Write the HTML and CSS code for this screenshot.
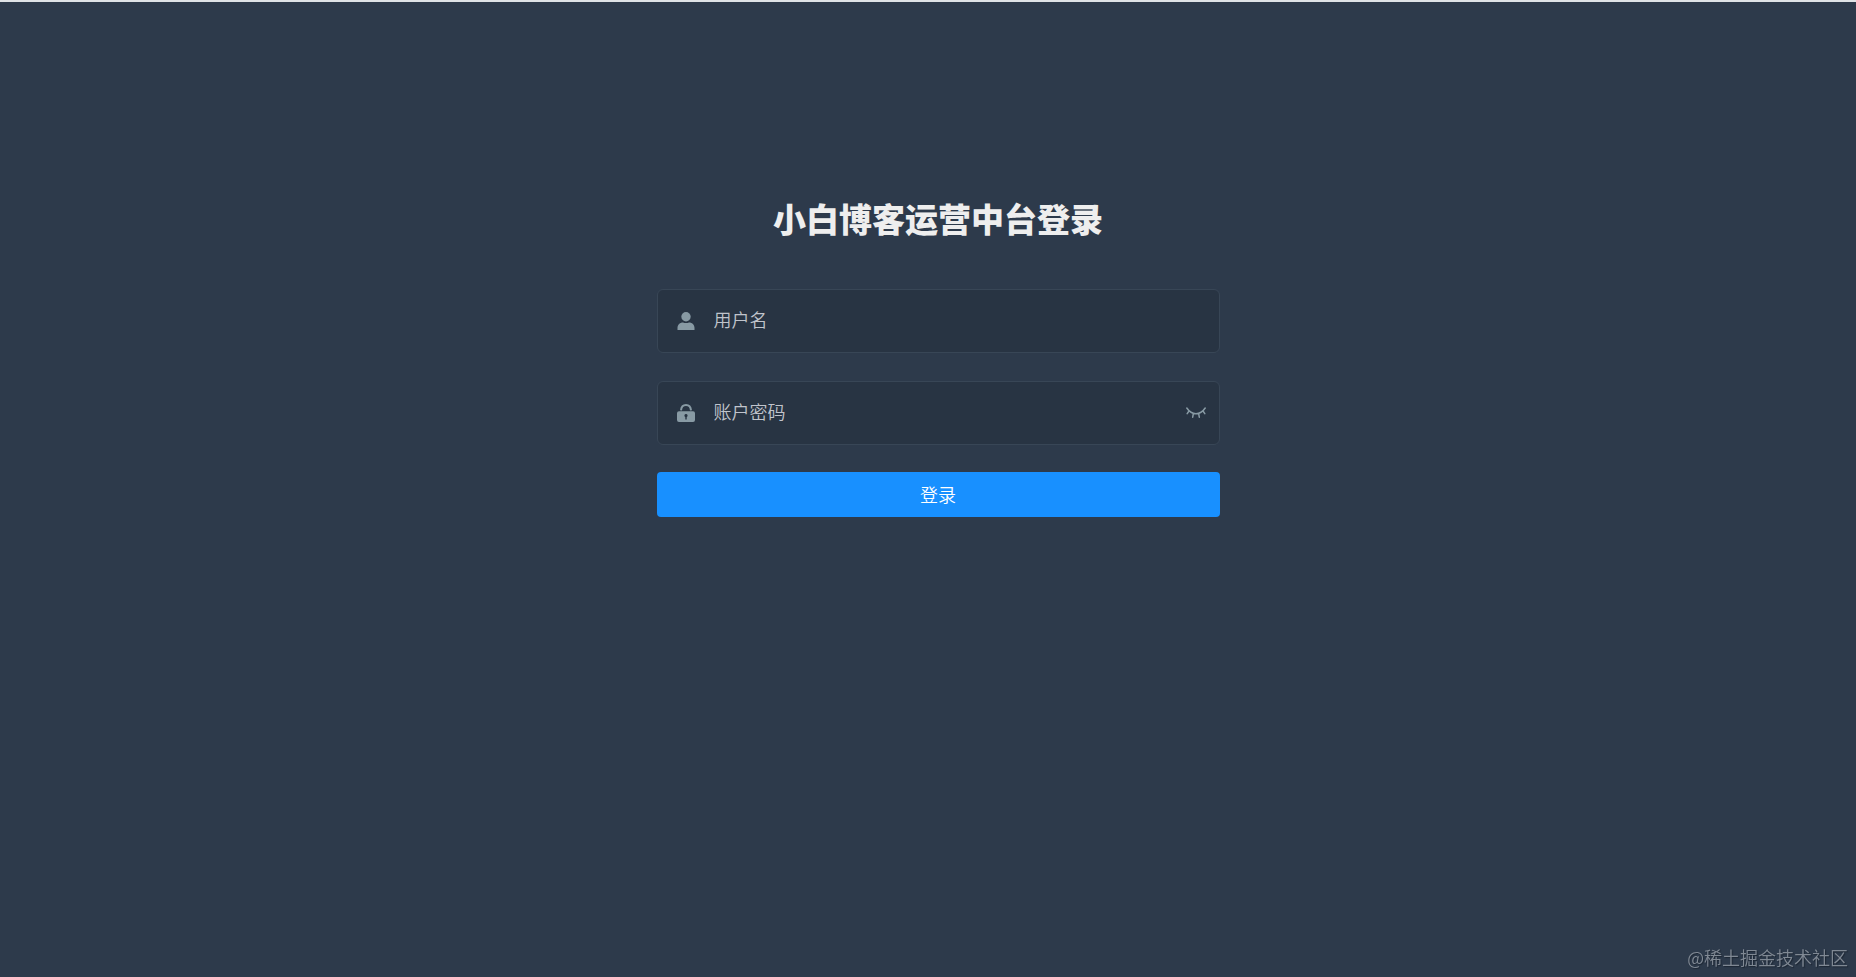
FILE: index.html
```html
<!DOCTYPE html>
<html lang="zh-CN">
<head>
  <meta charset="UTF-8">
  <meta name="viewport" content="width=device-width, initial-scale=1.0">
  <title>小白博客运营中台登录</title>
  <link rel="stylesheet" href="styles.css">
</head>
<body>
  <main class="login-container">
    <form class="login-form">
      <h1 class="title">小白博客运营中台登录</h1>

      <div class="form-item">
        <label class="svg-container" for="username" aria-label="用户名">
          <svg width="18" height="18" viewBox="0 0 18 18" fill="currentColor">
            <circle cx="9" cy="4.800" r="4.700"/>
            <path d="M.5 18v-2.200c0-3.200 2.500-5.400 5.500-5.400 1 .4 2 .6 3 .6s2-.2 3-.6c3 0 5.500 2.200 5.500 5.400V18z"/>
          </svg>
        </label>
        <input type="text" id="username" class="input-inner" placeholder="用户名">
      </div>

      <div class="form-item">
        <label class="svg-container" for="password" aria-label="账户密码">
          <svg width="18" height="18" viewBox="0 0 18 18">
            <path d="M4 6.300C4.300 3 6.300 1 9 1s4.700 2 5 5.300" fill="none" stroke="currentColor" stroke-width="2"/>
            <path fill="currentColor" fill-rule="evenodd" d="M2 7.300h14a2 2 0 0 1 2 2V16a2 2 0 0 1-2 2H2a2 2 0 0 1-2-2V9.300a2 2 0 0 1 2-2zM9 10a1.700 1.700 0 0 0-.7 3.200V15.500h1.400v-2.300A1.700 1.700 0 0 0 9 10z"/>
          </svg>
        </label>
        <input type="password" id="password" class="input-inner" placeholder="账户密码">
        <button type="button" class="show-pwd" aria-label="显示密码">
          <svg width="20" height="12" viewBox="0 0 20 12" fill="none" stroke="currentColor" stroke-width="1.500" stroke-linecap="round">
            <path d="M.8 1c2.600 3.900 5.500 5.800 9.200 5.800S16.600 4.900 19.200 1M3 4L1.200 6.600M7.300 6.800L6.700 10.200M12.700 6.800l.6 3.400M17 4l1.800 2.600"/>
          </svg>
        </button>
      </div>

      <button type="submit" class="login-button">登录</button>
    </form>
  </main>
  <div class="watermark">@稀土掘金技术社区</div>
</body>
</html>
```
FILE: styles.css
```css
* {
  box-sizing: border-box;
}

body {
  margin: 0;
  min-height: 100vh;
  border-top: 2px solid #dfe3e6;
  background-color: #2d3a4b;
  font-family: "Noto Sans CJK SC", sans-serif;
}

.login-container {
  padding: 186px 0 0 20px;
}

.login-form {
  width: 100%;
  max-width: 563px;
  margin: 0 auto;
}

.title {
  margin: 0 0 41px;
  color: #eee;
  font-size: 33px;
  font-weight: 900;
  line-height: 60px;
  text-align: center;
}

.form-item {
  display: flex;
  align-items: center;
  height: 64px;
  margin-bottom: 28px;
  border: 1px solid #384656;
  border-radius: 6px;
  background-color: #283443;
}

.form-item:last-of-type {
  margin-bottom: 27px;
}

.svg-container {
  display: flex;
  padding: 0 19px;
  color: #889aa4;
}

.input-inner {
  flex: 1;
  min-width: 0;
  height: 60px;
  padding: 0 0 4px;
  border: 0;
  outline: none;
  background: transparent;
  color: #fff;
  font-family: inherit;
  font-size: 18px;
  font-weight: 350;
}

.input-inner::placeholder {
  color: #c0c4cc;
  opacity: 1;
}

.show-pwd {
  display: flex;
  padding: 0 13px;
  border: 0;
  background: none;
  color: #889aa4;
  cursor: pointer;
}

.login-button {
  display: block;
  width: 100%;
  height: 45px;
  padding: 0;
  border: 0;
  border-radius: 4px;
  background-color: #1890ff;
  color: #fff;
  font-family: inherit;
  font-size: 18px;
  font-weight: 350;
  line-height: 45px;
  cursor: pointer;
}

.login-button:hover {
  background-color: #46a6ff;
}

.watermark {
  position: fixed;
  right: 8px;
  bottom: 8px;
  color: #808994;
  font-size: 18px;
  font-weight: 350;
  line-height: 24px;
  text-shadow: 1px 1px 1px #1c2633;
}
```
